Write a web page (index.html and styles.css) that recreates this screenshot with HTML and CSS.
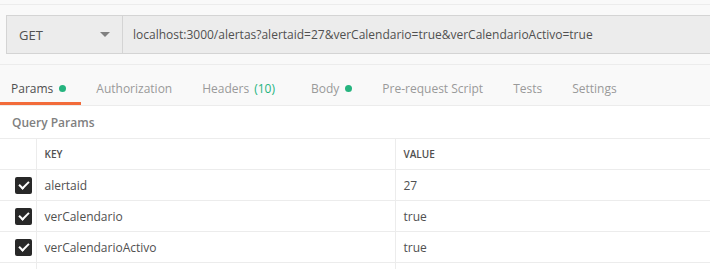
FILE: index.html
```html
<!DOCTYPE html>
<html lang="en">
<head>
    <meta charset="UTF-8">
    <title>Request</title>
    <link rel="stylesheet" href="styles.css">
</head>
<body>
    <div class="top-strip"></div>
    <div class="request-bar">
        <div class="method">
            <span>GET</span>
            <span class="caret"></span>
        </div>
        <div class="url">localhost:3000/alertas?alertaid=27&amp;verCalendario=true&amp;verCalendarioActivo=true</div>
    </div>
    <div class="tabs">
        <a class="tab active">Params <span class="dot"></span></a>
        <a class="tab">Authorization</a>
        <a class="tab">Headers <span class="count">(10)</span></a>
        <a class="tab">Body <span class="dot"></span></a>
        <a class="tab">Pre-request Script</a>
        <a class="tab">Tests</a>
        <a class="tab">Settings</a>
    </div>
    <div class="section-title">Query Params</div>
    <table class="params-table">
        <thead>
            <tr>
                <th class="check-col"></th>
                <th class="key-col">KEY</th>
                <th>VALUE</th>
            </tr>
        </thead>
        <tbody>
            <tr>
                <td class="check-col"><span class="checkbox"></span></td>
                <td>alertaid</td>
                <td>27</td>
            </tr>
            <tr>
                <td class="check-col"><span class="checkbox"></span></td>
                <td>verCalendario</td>
                <td>true</td>
            </tr>
            <tr>
                <td class="check-col"><span class="checkbox"></span></td>
                <td>verCalendarioActivo</td>
                <td>true</td>
            </tr>
            <tr class="empty-row">
                <td class="check-col"></td>
                <td></td>
                <td></td>
            </tr>
        </tbody>
    </table>
</body>
</html>
```

FILE: styles.css
```css
body {
    font-family: "Open Sans", "Liberation Sans", sans-serif;
    background-color: #ffffff;
    color: #505050;
    margin: 0;
    padding: 0;
    width: 710px;
    height: 269px;
    overflow: hidden;
}
.top-strip {
    height: 4px;
    background-color: #f9f9f9;
    border-bottom: 1px solid #ececec;
}
.request-bar {
    display: flex;
    background-color: #f9f9f9;
    padding: 10px 0 10px 6px;
    border-bottom: 1px solid #ececec;
}
.method {
    display: flex;
    align-items: center;
    justify-content: space-between;
    width: 116px;
    box-sizing: border-box;
    height: 39px;
    padding: 0 12px 0 12px;
    background-color: #ececec;
    border: 1px solid #d4d4d4;
    border-right: none;
    font-size: 13px;
    color: #505050;
}
.caret {
    width: 0;
    height: 0;
    border-left: 5px solid transparent;
    border-right: 5px solid transparent;
    border-top: 5px solid #808080;
}
.url {
    flex: 1;
    height: 39px;
    box-sizing: border-box;
    display: flex;
    align-items: center;
    padding-left: 10px;
    background-color: #ececec;
    border: 1px solid #d4d4d4;
    border-right: none;
    font-size: 12px;
    color: #505050;
}
.tabs {
    display: flex;
    background-color: #f9f9f9;
    border-bottom: 1px solid #ececec;
    height: 40px;
}
.tab {
    display: flex;
    align-items: center;
    gap: 5px;
    padding: 9px 11px 0 11px;
    margin-right: 8px;
    font-size: 12px;
    color: #9a9a9a;
    border-bottom: 3px solid transparent;
    box-sizing: border-box;
}
.tab.active {
    color: #505050;
    padding-right: 15px;
    margin-right: 4px;
    border-bottom-color: #f26b3a;
}
.dot {
    width: 7px;
    height: 7px;
    margin-left: 1px;
    border-radius: 50%;
    background-color: #26b47f;
}
.count {
    margin-right: 6px;
    color: #26b47f;
}
.section-title {
    font-size: 12px;
    font-weight: 600;
    color: #808080;
    padding: 0 12px;
    height: 32px;
    line-height: 33px;
    border-bottom: 1px solid #ececec;
}
.params-table {
    width: 100%;
    border-collapse: collapse;
    table-layout: fixed;
}
.params-table th, .params-table td {
    border-bottom: 1px solid #ececec;
    border-right: 1px solid #ececec;
    height: 30px;
    padding: 0 0 0 8px;
    text-align: left;
    font-size: 12px;
    color: #505050;
}
.params-table th {
    font-size: 10px;
    font-weight: 600;
    color: #505050;
}
.params-table th:last-child, .params-table td:last-child {
    border-right: none;
}
.params-table .check-col {
    width: 36px;
    padding: 0 0 0 15px;
    box-sizing: border-box;
}
.key-col {
    width: 359px;
    box-sizing: border-box;
}
.checkbox {
    display: inline-block;
    vertical-align: middle;
    width: 17px;
    height: 17px;
    border-radius: 2px;
    background-color: #282828;
    position: relative;
}
.checkbox::after {
    content: "";
    position: absolute;
    left: 6px;
    top: 2px;
    width: 4px;
    height: 8px;
    border: solid #ffffff;
    border-width: 0 2px 2px 0;
    transform: rotate(45deg);
}
.empty-row td {
    height: 10px;
}
```
